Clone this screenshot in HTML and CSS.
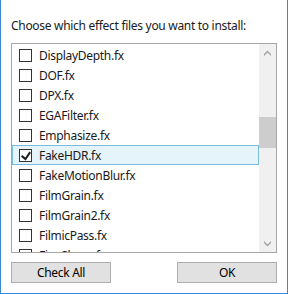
FILE: index.html
```html
<!DOCTYPE html>
<html lang="en">
<head>
    <meta charset="UTF-8">
    <meta name="viewport" content="width=device-width, initial-scale=1.0">
    <title>Install Effects</title>
    <link rel="stylesheet" href="styles.css">
</head>
<body>
    <div class="dialog">
        <p class="prompt">Choose which effect files you want to install:</p>

        <div class="listbox">
            <ul class="items">
                <li class="item"><span class="box"></span>DisplayDepth.fx</li>
                <li class="item"><span class="box"></span>DOF.fx</li>
                <li class="item"><span class="box"></span>DPX.fx</li>
                <li class="item"><span class="box"></span>EGAFilter.fx</li>
                <li class="item"><span class="box"></span>Emphasize.fx</li>
                <li class="item hover">
                    <span class="box">
                        <svg width="10" height="10" viewBox="0 0 10 9.1"><path d="M9.975 1.223L4.698 9.098H4.522L0 5.193L1.277 3.522L4.255 6.088L8.333 0L9.975 1.223Z" fill="#212121"/></svg>
                    </span>FakeHDR.fx
                </li>
                <li class="item"><span class="box"></span>FakeMotionBlur.fx</li>
                <li class="item"><span class="box"></span>FilmGrain.fx</li>
                <li class="item"><span class="box"></span>FilmGrain2.fx</li>
                <li class="item"><span class="box"></span>FilmicPass.fx</li>
                <li class="item"><span class="box"></span>FineSharp.fx</li>
            </ul>
            <div class="scrollbar">
                <div class="arrow">
                    <svg width="7" height="6" viewBox="0 0 7 6"><path d="M0 4V6L3.5 2.5L7 6V4L3.5 0.5Z" fill="#a2a2a2"/></svg>
                </div>
                <div class="track">
                    <div class="thumb"></div>
                </div>
                <div class="arrow">
                    <svg width="7" height="6" viewBox="0 0 7 6"><path d="M0 2V0L3.5 3.5L7 0V2L3.5 5.5Z" fill="#a2a2a2"/></svg>
                </div>
            </div>
        </div>

        <div class="buttons">
            <button class="btn">Check All</button>
            <button class="btn">OK</button>
        </div>
    </div>
</body>
</html>
```

FILE: styles.css
```css
body {
    margin: 0;
    font-family: "Noto Sans", "Open Sans", sans-serif;
    font-size: 12px;
    letter-spacing: -0.3px;
    color: #000;
}
.dialog {
    width: 288px;
    height: 294px;
    box-sizing: border-box;
    padding: 18px 10px 10px;
    background: #fff;
    border: 1px solid #3d87d4;
    border-top: none;
    display: flex;
    flex-direction: column;
}
.prompt {
    margin: 0 0 9px;
    line-height: 16px;
    height: 16px;
    white-space: nowrap;
    color: #1a1a1a;
}
.listbox {
    height: 210px;
    box-sizing: border-box;
    border: 1px solid #a6a6a6;
    display: flex;
    margin-bottom: 9px;
}
.items {
    flex: 1;
    list-style: none;
    margin: 0;
    padding: 1px 0 0;
    overflow: hidden;
    color: #1a1a1a;
}
.item {
    height: 20px;
    box-sizing: border-box;
    border: 1px solid transparent;
    display: flex;
    align-items: center;
    padding-left: 6px;
    white-space: nowrap;
}
.item.hover {
    background: #e5f3fb;
    border-color: #79bcdc;
}
.box {
    width: 13px;
    height: 13px;
    box-sizing: border-box;
    border: 1px solid #333;
    background: #fff;
    margin-right: 7px;
    margin-top: 1px;
    flex-shrink: 0;
    display: flex;
    align-items: center;
    justify-content: center;
}
.box svg {
    display: block;
}
.scrollbar {
    width: 17px;
    background: #f0f0f0;
    display: flex;
    flex-direction: column;
}
.arrow {
    height: 17px;
    display: flex;
    align-items: center;
    justify-content: center;
}
.track {
    flex: 1;
}
.thumb {
    margin-top: 56px;
    height: 31px;
    background: #cdcdcd;
}
.buttons {
    display: flex;
    justify-content: space-between;
}
.btn {
    width: 100px;
    height: 21px;
    padding: 0;
    margin: 0;
    font: inherit;
    letter-spacing: inherit;
    color: #000;
    background: #e1e1e1;
    border: 1px solid #adadad;
    border-radius: 0;
}
```
